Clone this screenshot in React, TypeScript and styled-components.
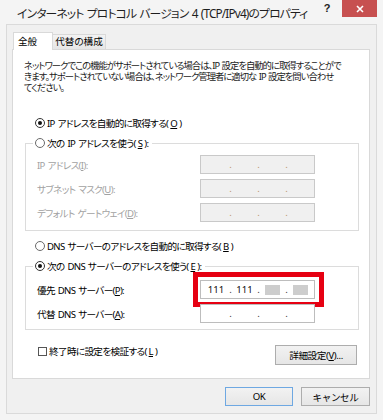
import React from "react";
import styled, { createGlobalStyle } from "styled-components";

const GlobalStyle = createGlobalStyle`
  html, body {
    margin: 0;
    padding: 0;
    background: #f4f4f4;
  }
  body {
    font-family: "Noto Sans", "Noto Sans CJK JP", sans-serif;
    font-feature-settings: "palt";
    color: #000;
  }
`;

const Window = styled.div`
  width: 383px;
  height: 420px;
  background: #f4f4f4;
  display: flex;
  flex-direction: column;
  box-sizing: border-box;
`;

const TitleBar = styled.div`
  height: 24px;
  display: flex;
  align-items: flex-start;
  padding-right: 6px;
`;

const Title = styled.div`
  flex: 1;
  min-width: 0;
  padding-left: 17px;
  margin-top: 3px;
  line-height: 20px;
  font-size: 11.8px;
  letter-spacing: -0.85px;
  word-spacing: 1px;
  color: #1e1e1e;
  white-space: nowrap;
`;

const HelpButton = styled.div`
  width: 14px;
  height: 17px;
  margin-right: 8px;
  line-height: 17px;
  text-align: center;
  font-family: "Liberation Sans", sans-serif;
  font-weight: bold;
  font-size: 11px;
  color: #222;
`;

const CloseButton = styled.div`
  width: 35px;
  height: 17px;
  background: #c75050;
  color: #fff;
  display: flex;
  align-items: center;
  justify-content: center;
`;

const Client = styled.div`
  margin: 0 6px;
  height: 390px;
  box-sizing: border-box;
  border: 1px solid #dadada;
  background: #f0f0f0;
  padding: 7px 6px 0 5px;
  display: flex;
  flex-direction: column;
`;

const Tabs = styled.div`
  display: flex;
  align-items: flex-end;
  padding-left: 1px;
  height: 17px;
  position: relative;
  z-index: 1;
`;

const Tab = styled.div<{ $active?: boolean }>`
  box-sizing: border-box;
  border: 1px solid #d9d9d9;
  border-bottom: none;
  font-size: 9.6px;
  white-space: nowrap;
  ${(p) =>
    p.$active
      ? `
    width: 40px;
    height: 18px;
    margin-bottom: -1px;
    background: #fff;
    padding-left: 4px;
    line-height: 17px;
  `
      : `
    width: 54px;
    height: 15px;
    margin-left: -1px;
    background: linear-gradient(#f3f3f3, #e6e6e6);
    text-align: center;
    line-height: 14px;
  `}
`;

const Panel = styled.div`
  box-sizing: border-box;
  height: 330px;
  width: 358px;
  background: #fff;
  border: 1px solid #d9d9d9;
  display: flex;
  flex-direction: column;
  font-size: 9.6px;
  letter-spacing: -0.65px;
  word-spacing: 1px;
`;

const Description = styled.div`
  margin: 10px 0 0 11px;
  height: 33px;
  line-height: 11px;
  font-size: 9.3px;
  white-space: nowrap;
  color: #1a1a1a;
  letter-spacing: -0.95px;
`;

const OptionRow = styled.label<{ $top: number }>`
  display: flex;
  align-items: center;
  height: 14px;
  margin-top: ${(p) => p.$top}px;
  padding-left: 22px;
  gap: 2px;
  white-space: nowrap;
`;

const RadioMark = styled.span<{ $checked?: boolean }>`
  box-sizing: border-box;
  width: 10px;
  height: 10px;
  border-radius: 50%;
  border: 1px solid ${(p) => (p.$checked ? "#333" : "#6a6a6a")};
  background: #fff;
  display: flex;
  align-items: center;
  justify-content: center;
  flex: none;
  &::after {
    content: "";
    width: 4px;
    height: 4px;
    border-radius: 50%;
    background: ${(p) => (p.$checked ? "#111" : "transparent")};
  }
`;

const CheckMark = styled.span`
  box-sizing: border-box;
  width: 9px;
  height: 9px;
  border: 1px solid #555;
  background: #fff;
  flex: none;
`;

const Group = styled.fieldset<{ $top: number; $padTop: number; $padBottom: number }>`
  margin: ${(p) => p.$top}px 10px 0 12px;
  padding: ${(p) => p.$padTop}px 0 ${(p) => p.$padBottom}px 0;
  border: 1px solid #dcdcdc;
  min-width: 0;
  display: flex;
  flex-direction: column;
  gap: 5px;
`;

const Legend = styled.legend`
  margin-left: 7px;
  padding: 0 4px 0 2px;
  height: 14px;
  display: flex;
  align-items: center;
  gap: 2px;
  white-space: nowrap;
`;

const FieldRow = styled.div<{ $disabled?: boolean }>`
  display: grid;
  grid-template-columns: 163px 115px;
  align-items: center;
  padding-left: 11px;
  height: 19px;
  color: ${(p) => (p.$disabled ? "#a2a2a2" : "#000")};
  white-space: nowrap;
`;

const IpBox = styled.div<{ $disabled?: boolean }>`
  box-sizing: border-box;
  width: 115px;
  height: 19px;
  border: 1px solid ${(p) => (p.$disabled ? "#c9c9c9" : "#bdbdbd")};
  background: ${(p) => (p.$disabled ? "#f0f0f0" : "#fff")};
  display: grid;
  grid-template-columns: 24px 5px 23px 5px 23px 5px 23px;
  padding-left: 3px;
  align-items: center;
  color: #111;
  letter-spacing: 0;
`;

const Octet = styled.span`
  display: flex;
  justify-content: center;
  align-items: center;
  height: 17px;
  font-size: 9.6px;
`;

const Dot = styled.span<{ $disabled?: boolean }>`
  text-align: center;
  font-size: 9.6px;
  color: ${(p) => (p.$disabled ? "#b8906c" : "#333")};
`;

const Masked = styled.span`
  width: 15px;
  height: 10px;
  background: #cdcdcd;
`;

const Highlight = styled.div`
  margin: -8px -9px -8px -7px;
  padding: 3px 4px 3px 2px;
  border: 5px solid #e60012;
`;

const BottomRow = styled.div`
  display: flex;
  align-items: flex-start;
  justify-content: space-between;
  margin-top: 14px;
  padding: 0 12px 0 25px;
`;

const CheckLabel = styled.label`
  display: flex;
  align-items: center;
  gap: 2px;
  height: 14px;
  white-space: nowrap;
`;

const Button = styled.button<{ $default?: boolean; $width: number }>`
  box-sizing: border-box;
  width: ${(p) => p.$width}px;
  height: ${(p) => (p.$default !== undefined ? 19 : 20)}px;
  border: 1px solid ${(p) => (p.$default ? "#6ea8e2" : "#adadad")};
  background: linear-gradient(#f2f2f2, #e6e6e6);
  font-family: inherit;
  font-size: 9.6px;
  letter-spacing: -0.4px;
  color: #000;
  padding: 0;
  white-space: nowrap;
`;

const DialogButtons = styled.div`
  display: flex;
  justify-content: flex-end;
  gap: 8px;
  margin-top: 8px;
`;

type IpProps = { disabled?: boolean; values?: (string | null)[] };

function IpField({ disabled, values = ["", "", "", ""] }: IpProps) {
  const cells: React.ReactNode[] = [];
  values.forEach((v, i) => {
    if (i > 0) {
      cells.push(
        <Dot key={`d${i}`} $disabled={disabled}>
          .
        </Dot>
      );
    }
    cells.push(<Octet key={`o${i}`}>{v === null ? <Masked /> : v}</Octet>);
  });
  return <IpBox $disabled={disabled}>{cells}</IpBox>;
}

export default function App() {
  return (
    <>
      <GlobalStyle />
      <Window>
        <TitleBar>
          <Title>インターネット プロトコル バージョン 4 (TCP/IPv4)のプロパティ</Title>
          <HelpButton>?</HelpButton>
          <CloseButton>
            <svg width="8" height="8" viewBox="0 0 8 8">
              <path d="M1 1L7 7M7 1L1 7" stroke="#fff" strokeWidth="1.6" />
            </svg>
          </CloseButton>
        </TitleBar>
        <Client>
          <Tabs>
            <Tab $active>全般</Tab>
            <Tab>代替の構成</Tab>
          </Tabs>
          <Panel>
            <Description>
              ネットワークでこの機能がサポートされている場合は、IP 設定を自動的に取得することがで
              <br />
              きます。サポートされていない場合は、ネットワーク管理者に適切な IP 設定を問い合わせ
              <br />
              てください。
            </Description>

            <OptionRow $top={23}>
              <RadioMark $checked />
              IP アドレスを自動的に取得する(<u>O</u>)
            </OptionRow>

            <Group $top={6} $padTop={5} $padBottom={8}>
              <Legend>
                <RadioMark />
                次の IP アドレスを使う(<u>S</u>):
              </Legend>
              <FieldRow $disabled>
                <span>
                  IP アドレス(<u>I</u>):
                </span>
                <IpField disabled />
              </FieldRow>
              <FieldRow $disabled>
                <span>
                  サブネット マスク(<u>U</u>):
                </span>
                <IpField disabled />
              </FieldRow>
              <FieldRow $disabled>
                <span>
                  デフォルト ゲートウェイ(<u>D</u>):
                </span>
                <IpField disabled />
              </FieldRow>
            </Group>

            <OptionRow $top={8}>
              <RadioMark />
              DNS サーバーのアドレスを自動的に取得する(<u>B</u>)
            </OptionRow>

            <Group $top={6} $padTop={7} $padBottom={6}>
              <Legend>
                <RadioMark $checked />
                次の DNS サーバーのアドレスを使う(<u>E</u>):
              </Legend>
              <FieldRow>
                <span>
                  優先 DNS サーバー(<u>P</u>):
                </span>
                <Highlight>
                  <IpField values={["111", "111", null, null]} />
                </Highlight>
              </FieldRow>
              <FieldRow>
                <span>
                  代替 DNS サーバー(<u>A</u>):
                </span>
                <IpField />
              </FieldRow>
            </Group>

            <BottomRow>
              <CheckLabel>
                <CheckMark />
                終了時に設定を検証する(<u>L</u>)
              </CheckLabel>
              <Button $width={82} style={{ marginTop: 1 }}>
                詳細設定(<u>V</u>)...
              </Button>
            </BottomRow>
          </Panel>
          <DialogButtons>
            <Button $default $width={68}>
              OK
            </Button>
            <Button $default={false} $width={69}>
              キャンセル
            </Button>
          </DialogButtons>
        </Client>
      </Window>
    </>
  );
}
